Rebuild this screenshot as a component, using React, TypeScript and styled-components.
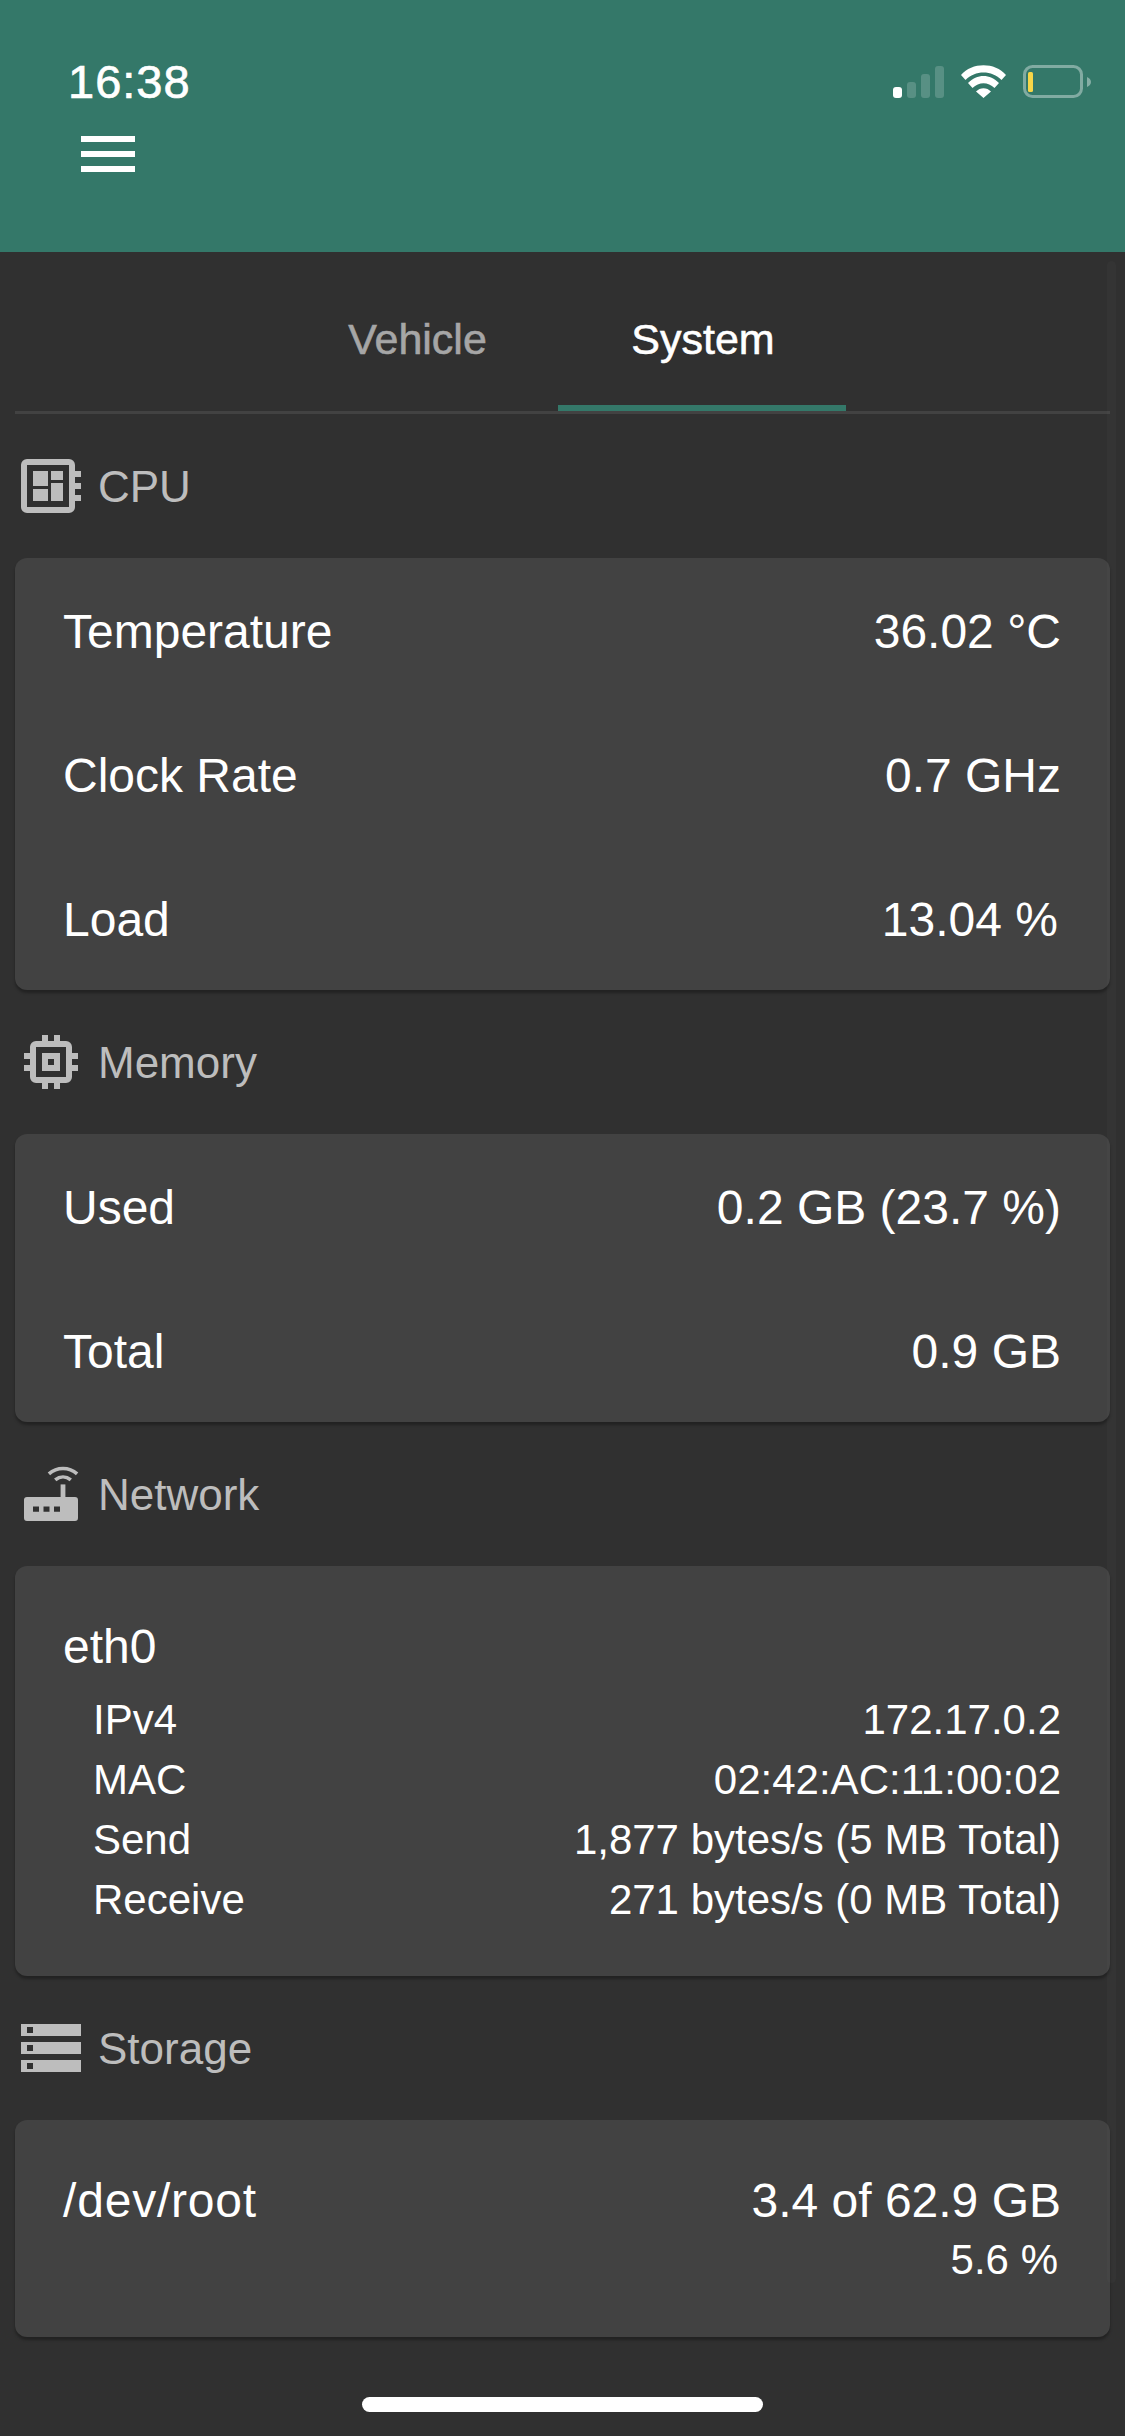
import React from 'react';
import styled, { createGlobalStyle } from 'styled-components';

const GlobalStyle = createGlobalStyle`
  html, body {
    margin: 0;
    padding: 0;
    background: #303030;
  }
`;

const Row = ({ label, value, inset }: { label: string; value: string; inset?: boolean }) => (
  <CardRow>
    <span>{label}</span>
    <RowValue $inset={inset}>{value}</RowValue>
  </CardRow>
);

const SubRow = ({ label, value }: { label: string; value: string }) => (
  <NetRow>
    <span>{label}</span>
    <span>{value}</span>
  </NetRow>
);

const Icon = ({ d }: { d: string }) => (
  <IconSvg viewBox="0 0 24 24">
    <path d={d} fill="#bdbdbd" />
  </IconSvg>
);

const RouterIcon = () => (
  <IconSvg viewBox="0 0 24 24">
    <path
      d="M4 13h16a1 1 0 0 1 1 1v6a1 1 0 0 1-1 1H4a1 1 0 0 1-1-1v-6a1 1 0 0 1 1-1zm2 3.200v1.700h2v-1.700H6zm3.500 0v1.700h2v-1.700h-2zm3.500 0v1.700h2v-1.700h-2z"
      fill="#bdbdbd"
      fillRule="evenodd"
    />
    <path d="M15.200 8.800h1.600V13h-1.600z" fill="#bdbdbd" />
    <path d="M11.300 5.300C14 2.900 18 2.900 20.700 5.300M13.400 7.300C15 6 17 6 18.600 7.300" fill="none" stroke="#bdbdbd" strokeWidth="1.2" />
  </IconSvg>
);

export default function App() {
  return (
    <Page>
      <GlobalStyle />
      <Header>
        <StatusBar>
          <Clock>16:38</Clock>
          <svg width="200" height="36" viewBox="0 0 200 36">
            <rect x="1" y="24" width="9" height="11" rx="3" fill="#fff" />
            <rect x="15" y="19" width="9" height="16" rx="3" fill="#fff" fillOpacity="0.18" />
            <rect x="29" y="11" width="9" height="24" rx="3" fill="#fff" fillOpacity="0.18" />
            <rect x="43" y="3" width="9" height="32" rx="3" fill="#fff" fillOpacity="0.18" />
            <path
              d="M69 12C80 -1 103 -1 114 12L109.500 17C100 7 83 7 73.500 17ZM76 20C85 10.500 98 10.500 107 20L102.500 25C96 18.500 87 18.500 80.500 25ZM84 28.500C88 24 95 24 99 28.500L91.500 35Z"
              fill="#fff"
            />
            <rect x="132.500" y="3.500" width="57" height="30" rx="8" fill="none" stroke="#fff" strokeOpacity="0.38" strokeWidth="3" />
            <rect x="136" y="9" width="5" height="20" rx="1.500" fill="#f7d648" />
            <path d="M195 14c2.500 1 4 2.800 4 5s-1.500 4-4 5z" fill="#fff" fillOpacity="0.4" />
          </svg>
        </StatusBar>
        <MenuButton>
          <MenuBar />
          <MenuBar />
          <MenuBar />
        </MenuButton>
      </Header>

      <Tabs>
        <Tab>Vehicle</Tab>
        <Tab $active>System</Tab>
      </Tabs>

      <Content>
        <SectionHead>
          <Icon d="M22 9V7h-2V5a2 2 0 0 0-2-2H4a2 2 0 0 0-2 2v14a2 2 0 0 0 2 2h14a2 2 0 0 0 2-2v-2h2v-2h-2v-2h2v-2h-2V9h2zm-4 10H4V5h14v14zM6 13h5v4H6v-4zm6-6h4v3h-4V7zM6 7h5v5H6V7zm6 4h4v6h-4v-6z" />
          <SectionTitle>CPU</SectionTitle>
        </SectionHead>
        <Card>
          <Row label="Temperature" value="36.02 °C" />
          <Row label="Clock Rate" value="0.7 GHz" />
          <Row label="Load" value="13.04 %" inset />
        </Card>

        <SectionHead>
          <Icon d="M17 17H7V7h10v10zm4-6V9h-2V7a2 2 0 0 0-2-2h-2V3h-2v2h-2V3H9v2H7a2 2 0 0 0-2 2v2H3v2h2v2H3v2h2v2a2 2 0 0 0 2 2h2v2h2v-2h2v2h2v-2h2a2 2 0 0 0 2-2v-2h2v-2h-2v-2h2zm-8 2h-2v-2h2v2zm2-4H9v6h6V9z" />
          <SectionTitle>Memory</SectionTitle>
        </SectionHead>
        <Card>
          <Row label="Used" value="0.2 GB (23.7 %)" />
          <Row label="Total" value="0.9 GB" />
        </Card>

        <SectionHead>
          <RouterIcon />
          <SectionTitle>Network</SectionTitle>
        </SectionHead>
        <BlockCard>
          <BlockTitle>eth0</BlockTitle>
          <NetList>
            <SubRow label="IPv4" value="172.17.0.2" />
            <SubRow label="MAC" value="02:42:AC:11:00:02" />
            <SubRow label="Send" value="1,877 bytes/s (5 MB Total)" />
            <SubRow label="Receive" value="271 bytes/s (0 MB Total)" />
          </NetList>
        </BlockCard>

        <SectionHead>
          <Icon d="M2 20h20v-4H2v4zm2-3h2v2H4v-2zM2 4v4h20V4H2zm4 3H4V5h2v2zm-4 7h20v-4H2v4zm2-3h2v2H4v-2z" />
          <SectionTitle>Storage</SectionTitle>
        </SectionHead>
        <BlockCard>
          <StorageTop>
            <DevicePath>/dev/root</DevicePath>
            <StorageValues>
              <BlockTitle>3.4 of 62.9 GB</BlockTitle>
              <StoragePercent>5.6 %</StoragePercent>
            </StorageValues>
          </StorageTop>
        </BlockCard>
      </Content>

      <ScrollThumb />
      <HomeIndicator />
    </Page>
  );
}

const Page = styled.div`
  position: relative;
  width: 1125px;
  height: 2436px;
  overflow: hidden;
  background: #303030;
  font-family: 'Liberation Sans', Arial, sans-serif;
  color: #fff;
`;

const Header = styled.header`
  height: 252px;
  box-sizing: border-box;
  padding: 57px 33px 0 68px;
  background: #347869;
`;

const StatusBar = styled.div`
  display: flex;
  justify-content: space-between;
  align-items: center;
  height: 48px;
`;

const Clock = styled.div`
  font-size: 47px;
  letter-spacing: 1px;
  -webkit-text-stroke: 0.7px #fff;
`;

const MenuButton = styled.div`
  display: flex;
  flex-direction: column;
  gap: 9px;
  width: 54px;
  margin: 31px 0 0 13px;
`;

const MenuBar = styled.div`
  height: 6px;
  background: #fff;
`;

const Tabs = styled.nav`
  display: flex;
  justify-content: center;
  height: 162px;
  margin: 0 15px;
  padding-right: 9px;
  border-bottom: 3px solid #424242;
  box-sizing: border-box;
`;

const Tab = styled.div<{ $active?: boolean }>`
  display: flex;
  align-items: center;
  justify-content: center;
  width: 288px;
  padding: 22px 0 0 ${(p) => (p.$active ? '2px' : '7px')};
  box-sizing: border-box;
  font-size: 43px;
  -webkit-text-stroke: 0.6px ${(p) => (p.$active ? '#fff' : '#a6a6a6')};
  color: ${(p) => (p.$active ? '#fff' : '#a6a6a6')};
  border-bottom: 6px solid ${(p) => (p.$active ? '#347869' : 'transparent')};
`;

const Content = styled.main`
  padding: 0 15px;
`;

const SectionHead = styled.div`
  display: flex;
  align-items: center;
  gap: 11px;
  height: 144px;
`;

const IconSvg = styled.svg`
  width: 72px;
  height: 72px;
  flex: none;
`;

const SectionTitle = styled.h2`
  margin: 0;
  padding-top: 1px;
  font-size: 44px;
  font-weight: 400;
  color: #bdbdbd;
`;

const Card = styled.section`
  padding: 0 49px 0 48px;
  background: #424242;
  border-radius: 12px;
  box-shadow: 0 3px 3px rgba(0, 0, 0, 0.3);
`;

const CardRow = styled.div`
  display: flex;
  justify-content: space-between;
  align-items: center;
  height: 144px;
  padding-top: 2px;
  box-sizing: border-box;
  font-size: 48px;
`;

const RowValue = styled.span<{ $inset?: boolean }>`
  padding-right: ${(p) => (p.$inset ? '3px' : '0')};
`;

const BlockCard = styled(Card)`
  padding-top: 50px;
  padding-bottom: 47px;
`;

const BlockTitle = styled.div`
  height: 60px;
  line-height: 61px;
  font-size: 48px;
`;

const DevicePath = styled(BlockTitle)`
  letter-spacing: 0.8px;
`;

const NetList = styled.div`
  margin: 13px 0 0 30px;
`;

const NetRow = styled.div`
  display: flex;
  justify-content: space-between;
  height: 60px;
  line-height: 61px;
  font-size: 42px;
`;

const StorageTop = styled.div`
  display: flex;
  justify-content: space-between;
`;

const StorageValues = styled.div`
  text-align: right;
`;

const StoragePercent = styled.div`
  height: 60px;
  line-height: 60px;
  font-size: 42px;
  padding-right: 3px;
`;

const ScrollThumb = styled.div`
  position: absolute;
  top: 261px;
  left: 1107px;
  width: 9px;
  height: 2022px;
  border-radius: 5px;
  background: rgba(255, 255, 255, 0.018);
`;

const HomeIndicator = styled.div`
  position: absolute;
  left: 362px;
  bottom: 24px;
  width: 401px;
  height: 15px;
  border-radius: 8px;
  background: #fff;
`;
